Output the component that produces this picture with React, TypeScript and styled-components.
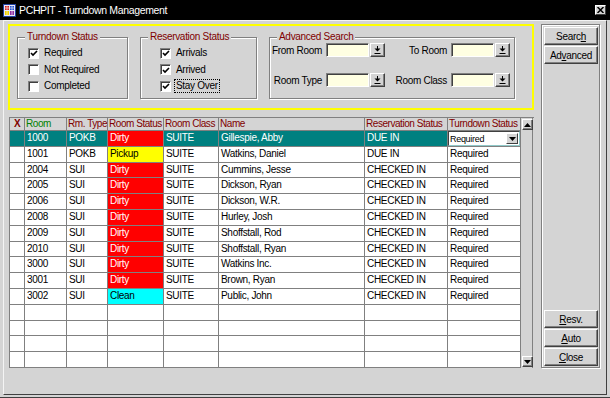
import React from "react";
import styled, { createGlobalStyle } from "styled-components";

const FACE = "#d4d4d4";
const SHADOW = "#808080";
const DARK = "#404040";
const MAROON = "#800000";
const TEAL = "#008080";

const GlobalStyle = createGlobalStyle`
  html, body {
    margin: 0;
    padding: 0;
    background: ${FACE};
  }
  body {
    font-family: "Liberation Sans", Arial, sans-serif;
    font-size: 10px;
    letter-spacing: -0.3px;
    color: #000;
  }
  * {
    box-sizing: border-box;
  }
`;

type Row = {
  room: string;
  type: string;
  status: "Dirty" | "Pickup" | "Clean";
  cls: string;
  name: string;
  res: string;
  turndown: string;
  selected?: boolean;
};

const rows: Row[] = [
  { room: "1000", type: "POKB", status: "Dirty", cls: "SUITE", name: "Gillespie, Abby", res: "DUE IN", turndown: "Required", selected: true },
  { room: "1001", type: "POKB", status: "Pickup", cls: "SUITE", name: "Watkins, Daniel", res: "DUE IN", turndown: "Required" },
  { room: "2004", type: "SUI", status: "Dirty", cls: "SUITE", name: "Cummins, Jesse", res: "CHECKED IN", turndown: "Required" },
  { room: "2005", type: "SUI", status: "Dirty", cls: "SUITE", name: "Dickson, Ryan", res: "CHECKED IN", turndown: "Required" },
  { room: "2006", type: "SUI", status: "Dirty", cls: "SUITE", name: "Dickson, W.R.", res: "CHECKED IN", turndown: "Required" },
  { room: "2008", type: "SUI", status: "Dirty", cls: "SUITE", name: "Hurley, Josh", res: "CHECKED IN", turndown: "Required" },
  { room: "2009", type: "SUI", status: "Dirty", cls: "SUITE", name: "Shoffstall, Rod", res: "CHECKED IN", turndown: "Required" },
  { room: "2010", type: "SUI", status: "Dirty", cls: "SUITE", name: "Shoffstall, Ryan", res: "CHECKED IN", turndown: "Required" },
  { room: "3000", type: "SUI", status: "Dirty", cls: "SUITE", name: "Watkins Inc.", res: "CHECKED IN", turndown: "Required" },
  { room: "3001", type: "SUI", status: "Dirty", cls: "SUITE", name: "Brown, Ryan", res: "CHECKED IN", turndown: "Required" },
  { room: "3002", type: "SUI", status: "Clean", cls: "SUITE", name: "Public, John", res: "CHECKED IN", turndown: "Required" },
];

const statusColors = {
  Dirty: { bg: "#ff0000", fg: "#ffffff" },
  Pickup: { bg: "#ffff00", fg: "#000000" },
  Clean: { bg: "#00ffff", fg: "#000000" },
};

const COLS = "15px 42px 41px 56px 55px 146px 83px 73px";

const Check = () => (
  <svg width="8" height="7" viewBox="0 0 8 7">
    <path d="M1 3 L3 5 L7 1" stroke="#000" strokeWidth="1.6" fill="none" />
  </svg>
);

const LovIcon = () => (
  <svg width="7" height="8" viewBox="0 0 7 8">
    <path d="M3.5 0 V3" stroke="#000" strokeWidth="1" />
    <path d="M0.5 2.5 H6.5 L3.5 5.5 Z" fill="#000" />
    <path d="M0.5 7.5 H6.5" stroke="#000" strokeWidth="1" />
  </svg>
);

const Arrow = ({ up }: { up?: boolean }) => (
  <svg width="7" height="4" viewBox="0 0 7 4">
    <path d={up ? "M0 4 H7 L3.5 0 Z" : "M0 0 H7 L3.5 4 Z"} fill="#000" />
  </svg>
);

const AppIcon = () => (
  <svg width="13" height="13" viewBox="0 0 13 13">
    <rect x="0.5" y="0.5" width="12" height="12" fill="#e8e8f8" stroke="#2040a0" />
    <rect x="2" y="2" width="4" height="4" fill="#d02020" />
    <rect x="7" y="2" width="4" height="4" fill="#2050d0" />
    <rect x="2" y="7" width="4" height="4" fill="#f0d000" />
    <rect x="7" y="7" width="4" height="4" fill="#9030a0" />
    <path d="M2 4 H11 M4 2 V11 M9 2 V11" stroke="#fff" strokeWidth="0.6" />
  </svg>
);

const CheckItem = ({ label, checked, focused }: { label: string; checked?: boolean; focused?: boolean }) => (
  <CheckRow>
    <CheckBox>{checked && <Check />}</CheckBox>
    <CheckLabel $focused={focused}>{label}</CheckLabel>
  </CheckRow>
);

const Lov = () => (
  <Combo>
    <LovInput />
    <LovButton>
      <LovIcon />
    </LovButton>
  </Combo>
);

const App = () => {
  const empty = Array.from({ length: 4 });
  return (
    <>
      <GlobalStyle />
      <Window>
        <TitleBar>
          <AppIcon />
          <Title>PCHPIT - Turndown Management</Title>
          <CloseBox>
            <svg width="7" height="6" viewBox="0 0 7 6">
              <path d="M0.5 0 L6.5 6 M6.5 0 L0.5 6" stroke="#000" strokeWidth="1.5" />
            </svg>
          </CloseBox>
        </TitleBar>
        <Frame>
          <Client>
            <LeftCol>
              <FilterPanel>
                <GroupBox $w={111}>
                  <Legend>Turndown Status</Legend>
                  <CheckList $indent={10}>
                    <CheckItem label="Required" checked />
                    <CheckItem label="Not Required" />
                    <CheckItem label="Completed" />
                  </CheckList>
                </GroupBox>
                <GroupBox $w={117}>
                  <Legend>Reservation Status</Legend>
                  <CheckList $indent={19}>
                    <CheckItem label="Arrivals" checked />
                    <CheckItem label="Arrived" checked />
                    <CheckItem label="Stay Over" checked focused />
                  </CheckList>
                </GroupBox>
                <GroupBox $w={246}>
                  <Legend>Advanced Search</Legend>
                  <SearchGrid>
                    <FieldLabel>From Room</FieldLabel>
                    <Lov />
                    <FieldLabel>To Room</FieldLabel>
                    <Lov />
                    <FieldLabel>Room Type</FieldLabel>
                    <Lov />
                    <FieldLabel>Room Class</FieldLabel>
                    <Lov />
                  </SearchGrid>
                </GroupBox>
              </FilterPanel>

              <Grid>
                <GridBody>
                  <HeadRow>
                    <HeadCell $center $color={MAROON} $bold>X</HeadCell>
                    <HeadCell $color="#008000">Room</HeadCell>
                    <HeadCell>Rm. Type</HeadCell>
                    <HeadCell>Room Status</HeadCell>
                    <HeadCell>Room Class</HeadCell>
                    <HeadCell>Name</HeadCell>
                    <HeadCell>Reservation Status</HeadCell>
                    <HeadCell>Turndown Status</HeadCell>
                  </HeadRow>
                  {rows.map((r) => {
                    const bg = r.selected ? TEAL : "#fff";
                    const fg = r.selected ? "#fff" : "#000";
                    const st = statusColors[r.status];
                    return (
                      <DataRow key={r.room}>
                        <Cell $bg={bg} />
                        <Cell $bg={bg} $fg={fg}>{r.room}</Cell>
                        <Cell $bg={bg} $fg={fg}>{r.type}</Cell>
                        <Cell $bg={st.bg} $fg={st.fg}>{r.status}</Cell>
                        <Cell $bg={bg} $fg={fg}>{r.cls}</Cell>
                        <Cell $bg={bg} $fg={fg}>{r.name}</Cell>
                        <Cell $bg={bg} $fg={fg}>{r.res}</Cell>
                        {r.selected ? (
                          <Cell $bg={bg}>
                            <CellCombo>
                              <span>{r.turndown}</span>
                              <ComboButton>
                                <Arrow />
                              </ComboButton>
                            </CellCombo>
                          </Cell>
                        ) : (
                          <Cell $bg={bg} $fg={fg}>{r.turndown}</Cell>
                        )}
                      </DataRow>
                    );
                  })}
                  {empty.map((_, i) => (
                    <DataRow key={"e" + i}>
                      <Cell />
                      <Cell />
                      <Cell />
                      <Cell />
                      <Cell />
                      <Cell />
                      <Cell />
                      <Cell />
                    </DataRow>
                  ))}
                </GridBody>
                <ScrollBar>
                  <ScrollButton>
                    <Arrow up />
                  </ScrollButton>
                  <ScrollButton>
                    <Arrow />
                  </ScrollButton>
                </ScrollBar>
              </Grid>
            </LeftCol>

            <ButtonPanel>
              <ButtonStack>
                <Button>Searc<u>h</u></Button>
                <Button>Ad<u>v</u>anced</Button>
              </ButtonStack>
              <ButtonStack>
                <Button><u>R</u>esv.</Button>
                <Button><u>A</u>uto</Button>
                <Button><u>C</u>lose</Button>
              </ButtonStack>
            </ButtonPanel>
          </Client>
        </Frame>
      </Window>
    </>
  );
};

export default App;

const Window = styled.div`
  width: 610px;
  height: 398px;
  display: flex;
  flex-direction: column;
  background: ${FACE};
  border-bottom: 1px solid ${DARK};
`;

const TitleBar = styled.div`
  height: 20px;
  flex: none;
  background: #000;
  color: #fff;
  display: flex;
  align-items: center;
  gap: 3px;
  padding: 0 4px 0 3px;
`;

const Title = styled.div`
  font-size: 10.5px;
  letter-spacing: -0.35px;
`;

const CloseBox = styled.div`
  margin-left: auto;
  width: 11px;
  height: 10px;
  background: ${FACE};
  border: 1px solid;
  border-color: #fff ${DARK} ${DARK} #fff;
  display: flex;
  align-items: center;
  justify-content: center;
`;

const Frame = styled.div`
  flex: 1;
  display: flex;
  padding: 0 3px 2px 3px;
`;

const Client = styled.div`
  flex: 1;
  display: flex;
  align-items: flex-start;
  border: 1px solid;
  border-color: #f4f4f4 ${DARK} ${DARK} #f4f4f4;
  padding: 3px 0 0 4px;
`;

const LeftCol = styled.div`
  width: 526px;
  display: flex;
  flex-direction: column;
`;

const FilterPanel = styled.div`
  height: 86px;
  border: 2px solid #ffff00;
  display: flex;
  align-items: flex-start;
  column-gap: 12px;
  padding: 5px 0 0 7px;
`;

const GroupBox = styled.fieldset<{ $w: number }>`
  width: ${(p) => p.$w}px;
  height: 68px;
  margin: 0;
  padding: 0;
  min-width: 0;
  border: 1px solid ${SHADOW};
  box-shadow: inset 1px 1px 0 #fff, 1px 1px 0 #fff;
`;

const Legend = styled.legend`
  margin-left: 7px;
  padding: 0 2px;
  line-height: 12px;
  color: ${MAROON};
  background: ${FACE};
`;

const CheckList = styled.div<{ $indent: number }>`
  display: flex;
  flex-direction: column;
  padding: 2px 0 0 ${(p) => p.$indent}px;
`;

const CheckRow = styled.div`
  height: 16.5px;
  display: flex;
  align-items: center;
  gap: 3px;
`;

const CheckBox = styled.span`
  width: 11px;
  height: 11px;
  background: #fff;
  border: 1px solid;
  border-color: ${SHADOW} #fff #fff ${SHADOW};
  box-shadow: inset 1px 1px 0 ${DARK};
  display: flex;
  align-items: center;
  justify-content: center;
  padding: 1px 0 0 1px;
`;

const CheckLabel = styled.span<{ $focused?: boolean }>`
  padding: 0 1px;
  line-height: 12px;
  border: 1px dotted ${(p) => (p.$focused ? "#000" : "transparent")};
`;

const SearchGrid = styled.div`
  display: grid;
  grid-template-columns: 52px 59px 58px 59px;
  grid-template-rows: 14px 14px;
  column-gap: 4px;
  row-gap: 16px;
  align-items: center;
  padding-top: 0;
`;

const FieldLabel = styled.div`
  text-align: right;
  white-space: nowrap;
`;

const Combo = styled.div`
  display: flex;
  gap: 1px;
  height: 14px;
`;

const LovInput = styled.div`
  width: 43px;
  background: #ffffe2;
  border: 1px solid;
  border-color: ${SHADOW} #fff #fff ${SHADOW};
  box-shadow: inset 1px 1px 0 ${DARK};
`;

const LovButton = styled.div`
  width: 15px;
  background: ${FACE};
  border: 1px solid;
  border-color: #fff ${DARK} ${DARK} #fff;
  box-shadow: inset -1px -1px 0 ${SHADOW};
  display: flex;
  align-items: center;
  justify-content: center;
`;

const Grid = styled.div`
  margin: 7px 0 0 1px;
  width: 525px;
  height: 251px;
  display: flex;
  border-top: 1px solid ${SHADOW};
`;

const GridBody = styled.div`
  width: 512px;
  display: flex;
  flex-direction: column;
  border-left: 1px solid ${SHADOW};
  overflow: hidden;
`;

const HeadRow = styled.div`
  height: 13px;
  flex: none;
  display: grid;
  grid-template-columns: ${COLS};
  border-bottom: 1px solid ${SHADOW};
`;

const HeadCell = styled.div<{ $color?: string; $center?: boolean; $bold?: boolean }>`
  border-right: 1px solid ${SHADOW};
  color: ${(p) => p.$color || MAROON};
  text-align: ${(p) => (p.$center ? "center" : "left")};
  font-weight: ${(p) => (p.$bold ? "bold" : "normal")};
  padding-left: ${(p) => (p.$center ? 0 : 1)}px;
  line-height: 12px;
  letter-spacing: -0.45px;
  white-space: nowrap;
  overflow: hidden;
`;

const DataRow = styled.div`
  height: 15.8px;
  flex: none;
  display: grid;
  grid-template-columns: ${COLS};
  border-bottom: 1px solid ${SHADOW};
`;

const Cell = styled.div<{ $bg?: string; $fg?: string }>`
  background: ${(p) => p.$bg || "#fff"};
  color: ${(p) => p.$fg || "#000"};
  border-right: 1px solid ${SHADOW};
  padding-left: 2px;
  line-height: 14px;
  white-space: nowrap;
  overflow: hidden;
`;

const CellCombo = styled.div`
  height: 15px;
  margin-left: -2px;
  background: #fff;
  border: 1px solid;
  border-color: ${DARK} #8fc8c8 #8fc8c8 ${DARK};
  display: flex;
  align-items: center;
  justify-content: space-between;
  padding: 0 1px 0 1px;
  font-size: 9px;
  color: #000;
`;

const ComboButton = styled.div`
  width: 12px;
  height: 11px;
  background: ${FACE};
  border: 1px solid;
  border-color: #fff ${DARK} ${DARK} #fff;
  display: flex;
  align-items: center;
  justify-content: center;
`;

const ScrollBar = styled.div`
  width: 12px;
  display: flex;
  flex-direction: column;
  justify-content: space-between;
  padding: 1px 0 1px 1px;
  border-right: 1px solid ${SHADOW};
`;

const ScrollButton = styled.div`
  width: 11px;
  height: 11px;
  background: ${FACE};
  border: 1px solid;
  border-color: #fff ${DARK} ${DARK} #fff;
  box-shadow: inset -1px -1px 0 ${SHADOW};
  display: flex;
  align-items: center;
  justify-content: center;
`;

const ButtonPanel = styled.div`
  margin-left: 7px;
  width: 59px;
  height: 344px;
  display: flex;
  flex-direction: column;
  justify-content: space-between;
  border: 1px solid ${SHADOW};
  box-shadow: inset 1px 1px 0 #fff, 1px 1px 0 #fff;
  padding: 2px 1px 1px 2px;
`;

const ButtonStack = styled.div`
  display: flex;
  flex-direction: column;
  gap: 1px;
`;

const Button = styled.div`
  width: 54px;
  height: 18px;
  background: ${FACE};
  border: 1px solid;
  border-color: #fff ${DARK} ${DARK} #fff;
  box-shadow: inset -1px -1px 0 ${SHADOW};
  display: flex;
  align-items: center;
  justify-content: center;
  u {
    text-decoration: underline;
  }
`;
